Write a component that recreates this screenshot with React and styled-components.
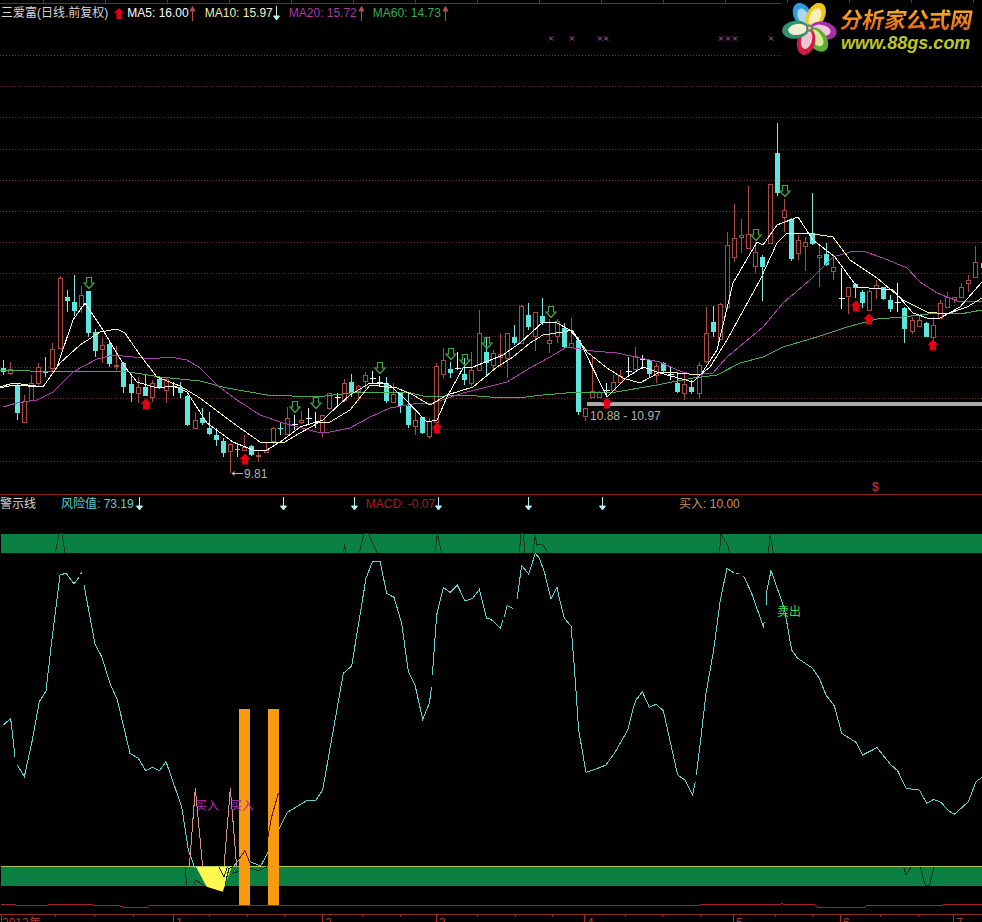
import React from "react";
import styled, { createGlobalStyle } from "styled-components";

const GlobalStyle = createGlobalStyle`
  html, body {
    margin: 0;
    background: #000;
    font-family: "Liberation Sans", "Noto Sans CJK SC", sans-serif;
  }
`;

const Page = styled.div`
  position: relative;
  display: flex;
  flex-direction: column;
  width: 982px;
  height: 922px;
  overflow: hidden;
  background: #000;
`;

const TopRule = styled.div`
  flex: none;
  height: 3px;
  border-bottom: 1px solid #8c2026;
  background: repeating-linear-gradient(
    90deg,
    transparent 0 43px,
    #8c2026 43px 44px,
    transparent 44px 62px
  );
`;

const Legend = styled.div`
  flex: none;
  display: flex;
  align-items: center;
  height: ${(p) => p.$height}px;
  font-size: 12px;
  line-height: 1;
  white-space: nowrap;
`;

const LegendText = styled.span`
  margin-left: ${(p) => p.$gap || 0}px;
  color: ${(p) => p.$color};
`;

const MarkIcon = styled.svg`
  flex: none;
  display: block;
  margin-left: ${(p) => p.$gap || 0}px;
`;

const Chart = styled.svg`
  flex: none;
  display: block;
  width: 982px;
  height: ${(p) => p.$height}px;

  polyline,
  line {
    shape-rendering: crispEdges;
  }
`;

const Divider = styled.div`
  flex: none;
  height: 1px;
  background: #8c2026;
`;

const ChartText = styled.text`
  font-family: "Liberation Sans", "Noto Sans CJK SC", sans-serif;
  font-size: 12px;
  font-weight: ${(p) => p.$weight || 400};
  fill: ${(p) => p.$color};
`;

const Logo = styled.div`
  position: absolute;
  top: 3px;
  right: 0;
  display: flex;
  width: 201px;
  height: 54px;
  background: #000;
`;

const LogoText = styled.div`
  display: flex;
  flex-direction: column;
  margin-left: 2px;
`;

const LogoName = styled.div`
  width: 140px;
  padding-top: 2px;
  font-family: "Noto Sans CJK SC", sans-serif;
  font-size: 22px;
  font-weight: 700;
  line-height: 27px;
  white-space: nowrap;
  transform: skewX(-10deg);
  background: linear-gradient(180deg, #f6b62c 15%, #ee6a12 85%);
  -webkit-background-clip: text;
  background-clip: text;
  color: transparent;
`;

const LogoUrl = styled.div`
  margin-top: 2px;
  font-family: "Liberation Sans", sans-serif;
  font-size: 18px;
  font-style: italic;
  font-weight: 700;
  line-height: 18px;
  color: #bcc622;
  white-space: nowrap;
`;

const R = 1;
const C = 0;
const W = 2;

// hi, body top, body bottom, lo, kind
const candles = [
  [360, 368, 372, 375, C], [362, 369, 373, 375, R], [384, 385, 413, 420, C], [395, 401, 422, 422, R],
  [375, 383, 400, 401, R], [363, 367, 383, 386, R], [357, 371, 373, 377, C], [343, 349, 368, 373, R],
  [276, 278, 348, 349, R], [290, 297, 301, 312, C], [275, 302, 311, 316, C], [286, 295, 306, 313, R],
  [291, 291, 333, 337, C], [329, 332, 351, 357, C], [338, 345, 349, 363, R], [340, 344, 364, 367, C],
  [346, 365, 366, 370, R], [362, 363, 387, 393, C], [376, 384, 393, 402, C], [377, 387, 393, 403, R],
  [375, 387, 396, 396, C], [380, 383, 397, 402, R], [377, 379, 388, 389, C], [377, 379, 390, 403, R],
  [382, 385, 386, 396, W], [382, 387, 393, 398, C], [395, 396, 425, 426, C], [412, 420, 428, 429, R],
  [408, 418, 423, 425, C], [412, 428, 434, 435, C], [428, 435, 440, 446, C], [438, 441, 453, 457, C],
  [444, 444, 451, 473, R], [443, 449, 450, 457, C], [435, 447, 450, 451, R], [445, 446, 455, 456, C],
  [452, 455, 456, 462, R], [442, 450, 452, 453, R], [427, 428, 441, 445, R], [423, 428, 429, 435, C],
  [407, 418, 434, 435, R], [415, 423, 424, 430, W], [411, 420, 422, 424, R], [408, 417, 418, 425, W],
  [412, 421, 422, 428, W], [415, 415, 432, 437, R], [393, 393, 408, 410, R],
  [393, 396, 397, 406, W], [379, 383, 400, 402, R], [374, 382, 393, 397, C], [385, 386, 391, 401, R],
  [372, 375, 381, 389, R], [371, 377, 378, 384, W], [376, 381, 382, 387, W], [377, 383, 401, 403, C],
  [383, 394, 402, 403, R], [392, 393, 406, 413, C], [392, 406, 425, 428, C], [412, 420, 426, 435, R],
  [417, 417, 433, 434, C], [418, 421, 436, 439, R], [363, 366, 422, 423, R], [348, 360, 374, 378, R],
  [362, 369, 373, 378, C], [352, 367, 368, 370, W], [358, 374, 380, 385, C], [352, 370, 383, 386, R],
  [310, 333, 370, 370, R], [337, 352, 363, 377, C], [350, 353, 365, 370, R], [334, 354, 357, 367, R],
  [333, 333, 358, 378, R], [325, 337, 343, 345, C], [305, 306, 343, 343, R], [303, 315, 327, 330, C],
  [312, 312, 336, 351, R], [298, 316, 323, 325, C], [319, 340, 343, 353, R], [319, 321, 336, 343, R],
  [323, 328, 347, 348, C], [318, 343, 347, 349, R], [337, 340, 412, 415, C], [408, 408, 416, 421, R],
  [356, 391, 397, 398, R], [391, 392, 397, 398, R], [383, 389, 390, 397, W], [375, 382, 390, 390, R],
  [370, 376, 382, 384, R], [357, 370, 371, 375, W], [347, 356, 369, 370, R], [355, 358, 359, 369, W],
  [359, 360, 374, 377, C], [363, 366, 375, 383, R],
  [362, 363, 371, 373, C], [367, 373, 375, 380, W], [372, 383, 392, 393, C], [373, 384, 393, 400, R],
  [380, 387, 392, 394, C], [362, 365, 393, 399, R], [307, 333, 361, 363, R], [306, 322, 332, 337, C],
  [303, 304, 339, 340, R], [232, 245, 307, 310, R], [204, 238, 257, 262, R], [219, 235, 237, 253, R],
  [186, 234, 248, 248, R], [242, 252, 266, 273, R], [255, 257, 267, 301, C], [184, 184, 243, 244, R],
  [123, 153, 193, 196, C], [199, 210, 217, 232, R], [218, 219, 259, 261, C], [235, 240, 253, 260, R],
  [237, 242, 246, 271, R], [193, 233, 244, 245, C], [245, 255, 257, 287, R], [243, 254, 265, 266, C],
  [257, 267, 271, 280, R], [268, 297, 298, 309, W], [287, 287, 296, 314, R], [283, 284, 288, 298, C],
  [290, 292, 303, 308, C], [290, 291, 310, 311, R], [280, 285, 288, 299, R], [287, 287, 299, 300, C],
  [295, 300, 309, 312, C], [283, 301, 303, 312, W], [307, 308, 329, 343, C], [317, 320, 331, 334, R],
  [316, 320, 326, 327, R], [322, 323, 337, 337, C], [317, 325, 337, 340, R], [300, 303, 318, 319, R],
  [292, 297, 307, 307, R], [297, 297, 299, 303, R], [283, 287, 297, 298, R], [275, 280, 283, 292, R],
  [246, 262, 277, 277, R], [257, 263, 268, 280, C],
];

const ma5 = [
  [0, 388], [13, 385], [43, 387], [57, 367], [73, 320], [85, 303], [103, 330], [125, 367], [137, 382],
  [157, 388], [173, 386], [187, 392], [207, 423], [233, 442], [253, 450], [267, 450], [283, 440], [300, 427],
  [323, 420], [330, 413], [350, 395], [370, 383], [387, 383], [403, 397], [427, 422], [437, 420], [447, 397],
  [463, 368], [473, 367], [503, 355], [520, 343], [543, 322], [557, 323], [570, 330], [580, 342], [607, 397],
  [627, 377], [643, 367], [660, 373], [693, 382], [702, 373], [717, 350], [733, 283], [757, 242], [763, 245],
  [777, 225], [798, 217], [813, 240], [835, 257], [857, 287], [893, 290], [913, 313], [927, 318], [940, 318],
  [960, 307], [982, 282],
];
const ma10 = [
  [0, 387], [13, 383], [43, 387], [60, 363], [80, 345], [100, 332], [117, 329], [125, 333], [140, 355], [157, 377],
  [180, 386], [200, 398], [233, 423], [260, 442], [283, 443], [300, 433], [320, 422], [330, 422], [350, 410],
  [370, 385], [397, 388], [413, 395], [430, 405], [447, 395], [473, 387], [497, 367], [513, 357], [530, 343],
  [543, 335], [563, 332], [572, 330], [587, 352], [607, 368], [623, 378], [640, 383], [660, 372], [677, 373],
  [700, 375], [710, 367], [727, 340], [760, 280], [777, 243], [787, 233], [807, 233], [833, 237], [850, 260],
  [877, 278], [903, 300], [927, 312], [947, 314], [967, 307], [982, 298],
];
const ma20 = [
  [3, 407], [17, 403], [37, 400], [53, 392], [73, 372], [97, 359], [113, 355], [133, 357], [150, 359], [170, 357],
  [187, 360], [200, 368], [217, 385], [237, 400], [260, 415], [283, 423], [317, 432], [330, 432], [350, 428],
  [370, 417], [390, 408], [413, 404], [433, 403], [463, 393], [487, 387], [507, 382], [530, 368], [550, 357],
  [567, 347], [593, 351], [617, 353], [640, 358], [660, 362], [677, 370], [693, 375], [713, 373], [727, 357],
  [763, 327], [783, 303], [810, 280], [833, 257], [850, 252], [863, 251], [883, 258], [907, 268], [920, 282],
  [937, 293], [957, 301], [982, 301],
];
const ma60 = [
  [0, 370], [60, 372], [123, 371], [160, 377], [200, 381], [227, 388], [267, 395], [317, 397], [350, 393],
  [407, 392], [427, 397], [463, 395], [490, 397], [517, 398], [543, 395], [578, 392], [610, 393], [657, 385],
  [693, 378], [717, 375], [740, 363], [763, 357], [783, 347], [817, 337], [847, 327], [877, 319], [903, 317],
  [937, 313], [960, 314], [982, 310],
];

const gridRows = Array.from({ length: 14 }, (_, i) => Math.round(55 + i * 31.2) + 0.5);
const crosses = [551, 572, 600, 606, 721, 728, 735, 771];
const hollowArrows = [
  [89, 283], [295, 407], [316, 403], [380, 368], [451, 354], [465, 360], [487, 343], [551, 312], [756, 235], [785, 191],
];
const redArrows = [[146, 404], [245, 459], [437, 428], [607, 403], [856, 306], [869, 319], [933, 345]];

// zoomed crop coordinates back to page coordinates
const crop = (ox, oy, pts) => pts.map(([x, y]) => [ox + x / 3, oy + y / 3]);
const line = (pts) => pts.map((p) => p.join(",")).join(" ");

const oscillator = [
  crop(0, 560, [[10, 495], [32, 475], [45, 590]]),
  crop(0, 560, [[52, 615], [73, 650], [95, 550], [118, 425], [138, 393], [155, 245], [180, 45], [198, 40], [222, 72], [238, 50]]),
  crop(0, 560, [[242, 42], [246, 36]]),
  crop(0, 560, [
    [252, 75], [285, 252], [305, 290], [330, 370], [352, 420], [390, 580], [415, 595], [437, 632], [458, 622], [478, 632],
    [498, 605], [545, 740], [565, 870], [585, 925],
  ]),
  crop(0, 560, [
    [700, 920], [720, 895], [750, 905], [782, 918], [805, 875], [837, 808], [862, 757], [920, 722], [948, 720], [968, 690],
    [1030, 340], [1055, 318], [1098, 55], [1118, 3], [1140, 3], [1160, 100], [1182, 112], [1205, 190], [1225, 335], [1245, 375],
    [1268, 478], [1288, 430], [1295, 380],
  ]),
  [
    ...crop(0, 560, [[1297, 345], [1310, 165], [1330, 82], [1350, 97], [1372, 75], [1395, 123], [1418, 115], [1438, 88], [1460, 175], [1473, 178]]),
    ...crop(491, 560, [[28, 205], [36, 180]]),
  ],
  crop(491, 560, [[40, 170], [48, 137], [65, 145]]),
  crop(491, 560, [
    [78, 118], [92, 17], [113, 42], [133, -20], [145, -5], [160, 35], [180, 118], [198, 82], [205, 115], [220, 175], [240, 198],
    [250, 320], [263, 510], [285, 637], [320, 625], [345, 615], [372, 577], [410, 510], [425, 450], [435, 420], [454, 395],
    [475, 442], [495, 433], [517, 452], [560, 645], [582, 660], [605, 705], [613, 665],
  ]),
  crop(491, 560, [[616, 645], [630, 530], [645, 400], [668, 270], [688, 120], [708, 25], [730, 40]]),
  crop(491, 560, [[735, 40], [745, 40]]),
  crop(491, 560, [[757, 47], [780, 95], [817, 200], [820, 185]]),
  crop(491, 560, [
    [826, 135], [826, 100], [840, 32], [880, 145], [902, 270], [920, 295], [965, 325], [985, 355], [1005, 405], [1030, 438],
    [1052, 520], [1095, 547], [1115, 585], [1158, 563], [1200, 615], [1220, 632], [1245, 685], [1285, 690], [1307, 730],
    [1328, 718], [1350, 727], [1372, 752], [1390, 763], [1432, 725], [1455, 665], [1473, 652],
  ]),
];

const upperTraces = [
  crop(0, 485, [[165, 205], [178, 145], [186, 145], [195, 205]]),
  crop(0, 485, [[1030, 205], [1034, 178], [1038, 205]]),
  crop(0, 485, [[1078, 205], [1092, 145], [1105, 145], [1132, 205]]),
  crop(0, 485, [[1305, 205], [1312, 145], [1325, 205]]),
  crop(491, 485, [[85, 205], [90, 145], [97, 145], [102, 205]]),
  crop(491, 485, [[125, 205], [133, 150], [137, 180], [155, 178], [172, 205]]),
  crop(491, 485, [[685, 205], [690, 148], [710, 180], [716, 205]]),
  crop(491, 485, [[832, 205], [838, 145], [847, 205]]),
];

const lowerTraces = [
  crop(150, 700, [[105, 500], [110, 555]]),
  crop(150, 700, [[130, 555], [138, 540], [158, 555]]),
  crop(150, 700, [[207, 500], [222, 530], [232, 500]]),
  crop(150, 700, [[225, 555], [237, 505], [248, 500]]),
  crop(150, 700, [[245, 520], [300, 505], [325, 512], [352, 500]]),
  crop(782, 850, [[365, 50], [372, 75], [386, 52]]),
  crop(782, 850, [[415, 50], [430, 107], [442, 107], [456, 50]]),
];

const salmon = [
  crop(150, 700, [[118, 500], [136, 265], [158, 500]]),
  crop(150, 700, [[222, 500], [241, 265], [260, 500]]),
];

const maroon = [
  crop(150, 700, [[265, 480], [285, 452], [300, 490]]),
  crop(150, 700, [[354, 410], [365, 350], [385, 280]]),
];

const baseline = [
  [1, 904], [15, 904], [16, 905], [48, 905], [50, 904], [92, 904], [93, 905], [120, 906], [123, 907], [148, 907], [150, 905],
  [700, 905], [782, 904], [815, 905], [817, 907], [865, 907], [867, 905], [943, 905], [945, 904], [982, 904],
];

const axisTicks = [55, 94, 133, 209, 247, 284, 362, 400, 477, 515, 552, 625, 662, 700, 775, 812, 880, 918];
const axisLabels = [
  ["2012年", 2, 1], ["1", 176, 173], ["2", 325, 322], ["3", 439, 436], ["4", 587, 584], ["5", 736, 733], ["6", 843, 840], ["7", 956, 953],
];

const petals = [
  [-28, "#2f9ae0", "#a9d9ee"],
  [27, "#efc41f", "#f8f0b4"],
  [101, "#a52da6", "#f2c4dd"],
  [145, "#5fae33", "#d9e79f"],
  [-166, "#cf1a44", "#f1c3ce"],
  [-97, "#2f9170", "#efefd2"],
];

const ThinArrow = ({ color, down, gap, height = 15 }) => (
  <MarkIcon $gap={gap} width="7" height={height} viewBox={`0 0 7 ${height}`}>
    {down ? (
      <path d={`M3.5 0V${height - 4}M0.5 ${height - 5}H6.5L3.5 ${height - 1}Z`} stroke={color} fill={color} strokeWidth="1" />
    ) : (
      <path d={`M3.5 ${height}V4M1 5H6L3.5 0.5Z`} stroke={color} fill={color} strokeWidth="1" />
    )}
  </MarkIcon>
);

const BoldArrow = ({ gap }) => (
  <MarkIcon $gap={gap} width="10" height="11" viewBox="0 0 10 11">
    <path d="M5 0L10 5H7.5V11H2.5V5H0Z" fill="#e00012" />
  </MarkIcon>
);

const Candle = ({ index, data }) => {
  const [hi, top, bot, lo, kind] = data;
  const x = Math.floor(3.3 + 7.1 * index) + 0.5;
  const color = kind === R ? "#ab4b43" : kind === W ? "#d8fbfb" : "#5ee6de";
  if (kind === R) {
    return (
      <g stroke={color} strokeWidth="1">
        <line x1={x} x2={x} y1={hi} y2={top} />
        <line x1={x} x2={x} y1={bot} y2={lo} />
        <rect x={x - 2} y={top + 0.5} width="4" height={Math.max(bot - top, 1)} fill="#000" />
      </g>
    );
  }
  return (
    <g>
      <line x1={x} x2={x} y1={hi} y2={lo} stroke={kind === W ? color : "#7fe4e0"} strokeWidth="1" />
      {kind === W ? (
        <line x1={x - 3} x2={x + 3} y1={top + 1} y2={top + 1} stroke={color} strokeWidth="1" />
      ) : (
        <rect x={x - 2.5} y={top} width="5" height={bot - top} fill={color} />
      )}
    </g>
  );
};

const Trace = ({ pts, color, width = 1 }) => (
  <polyline points={line(pts)} fill="none" stroke={color} strokeWidth={width} />
);

const UpperChart = () => (
  <Chart $height={472} viewBox="0 22 982 472">
    {gridRows.map((y) => (
      <line key={y} x1="0" x2="982" y1={y} y2={y} stroke="#7a2a2c" strokeWidth="1" strokeDasharray="1 2" />
    ))}
    {crosses.map((x) => (
      <path key={x} d={`M${x - 2} 36.5L${x + 2} 40.5M${x + 2} 36.5L${x - 2} 40.5`} stroke="#c050c4" strokeWidth="1" />
    ))}
    {candles.map((c, i) => (
      <Candle key={i} index={i} data={c} />
    ))}
    <Trace pts={ma60} color="#48ad58" />
    <Trace pts={ma20} color="#a93fa8" />
    <Trace pts={ma10} color="#f2f2b4" />
    <Trace pts={ma5} color="#ffffff" />
    <rect x="587" y="402" width="395" height="4" fill="#a9a9a9" />
    {hollowArrows.map(([x, y]) => (
      <path
        key={x}
        d={`M${x - 2.5} ${y - 5.5}H${x + 2.5}V${y}H${x + 5}L${x} ${y + 5.5}L${x - 5} ${y}H${x - 2.5}Z`}
        fill="none"
        stroke="#3fa63f"
        strokeWidth="1.2"
      />
    ))}
    {redArrows.map(([x, y]) => (
      <path
        key={x}
        d={`M${x} ${y - 5.5}L${x + 5.5} ${y}H${x + 3}V${y + 5.5}H${x - 3}V${y}H${x - 5.5}Z`}
        fill="#e40014"
      />
    ))}
    <path d="M232 473.5H243M232 473.5L235 471.5M232 473.5L235 475.5" stroke="#b8b8b8" fill="none" />
    <ChartText x="244" y="478" $color="#b4b4b4">9.81</ChartText>
    <ChartText x="590" y="420" $color="#b4b4b4">10.88 - 10.97</ChartText>
    <ChartText x="872" y="491" $color="#c02030" $weight={700}>$</ChartText>
  </Chart>
);

const LowerChart = () => (
  <Chart $height={410} viewBox="0 512 982 410">
    <rect x="1" y="534" width="981" height="19" fill="#0a8042" />
    <rect x="1" y="866" width="981" height="20" fill="#0a8042" />
    <line x1="1" x2="982" y1="866.5" y2="866.5" stroke="#a8c85a" />
    <polygon points={line(crop(150, 700, [[138, 500], [245, 500], [218, 575], [170, 560]]))} fill="#fff84e" />
    {upperTraces.map((t, i) => (
      <Trace key={i} pts={t} color="#12351f" />
    ))}
    {lowerTraces.map((t, i) => (
      <Trace key={i} pts={t} color="#0c2c18" />
    ))}
    {oscillator.map((t, i) => (
      <Trace key={i} pts={t} color="#66d2d0" />
    ))}
    {salmon.map((t, i) => (
      <Trace key={i} pts={t} color="#d8937f" />
    ))}
    <rect x="239" y="709" width="11" height="197" fill="#f89a10" />
    <rect x="268" y="709" width="11" height="197" fill="#f89a10" />
    {maroon.map((t, i) => (
      <Trace key={i} pts={t} color="#5e1020" />
    ))}
    <ChartText x="195" y="810" $color="#b12fb3">买入</ChartText>
    <ChartText x="230" y="810" $color="#b12fb3">买入</ChartText>
    <ChartText x="777" y="616" $color="#3fd84a">卖出</ChartText>
    <Trace pts={baseline} color="#a3222e" />
    <line x1="0" x2="982" y1="914.5" y2="914.5" stroke="#8c2a2e" />
    {axisTicks.map((x) => (
      <line key={x} x1={x + 0.5} x2={x + 0.5} y1="914" y2="917" stroke="#8c2a2e" />
    ))}
    {axisLabels.map(([label, x, tick]) => (
      <g key={label}>
        <line x1={tick + 0.5} x2={tick + 0.5} y1="914" y2="922" stroke="#a82a2e" />
        <ChartText x={x} y="927" $color="#b23a3a">{label}</ChartText>
      </g>
    ))}
  </Chart>
);

const LogoMark = () => (
  <svg width="58" height="54" viewBox="779 3 58 54">
    {petals.map(([angle, outer, inner]) => (
      <g key={angle} transform={`rotate(${angle} 807.5 28)`}>
        <ellipse cx="807.5" cy="14" rx="9" ry="13.5" fill={outer} />
        <ellipse cx="807.5" cy="16" rx="5.5" ry="9.5" fill={inner} />
      </g>
    ))}
    <circle cx="807.5" cy="28" r="3.5" fill="#7d7a5a" />
    <circle cx="807.5" cy="28" r="1.5" fill="#d8d4c0" />
  </svg>
);

export default function App() {
  return (
    <Page>
      <GlobalStyle />
      <TopRule />
      <Legend $height={18}>
        <LegendText $gap={1} $color="#d6d6d6">三爱富(日线.前复权)</LegendText>
        <BoldArrow gap={6} />
        <LegendText $gap={3} $color="#ffffff">MA5: 16.00</LegendText>
        <ThinArrow color="#b05050" />
        <LegendText $gap={9} $color="#f0f0b8">MA10: 15.97</LegendText>
        <ThinArrow color="#b4f2f2" down />
        <LegendText $gap={9} $color="#ab3ca8">MA20: 15.72</LegendText>
        <ThinArrow gap={1} color="#b05050" />
        <LegendText $gap={8} $color="#35ad54">MA60: 14.73</LegendText>
        <ThinArrow gap={1} color="#b05050" />
      </Legend>
      <UpperChart />
      <Divider />
      <Legend $height={17}>
        <LegendText $color="#d6d6d6">警示线</LegendText>
        <LegendText $gap={25} $color="#5fcfcf">风险值: 73.19</LegendText>
        <ThinArrow gap={2} color="#b4f2f2" down height={14} />
        <ThinArrow gap={137} color="#b4f2f2" down height={14} />
        <ThinArrow gap={64} color="#b4f2f2" down height={14} />
        <LegendText $gap={8} $color="#a81c22">MACD: -0.07</LegendText>
        <ThinArrow color="#b4f2f2" down height={14} />
        <ThinArrow gap={83} color="#b4f2f2" down height={14} />
        <ThinArrow gap={67} color="#b4f2f2" down height={14} />
        <LegendText $gap={73} $color="#c4906e">买入: 10.00</LegendText>
      </Legend>
      <LowerChart />
      <Logo>
        <LogoMark />
        <LogoText>
          <LogoName>分析家公式网</LogoName>
          <LogoUrl>www.88gs.com</LogoUrl>
        </LogoText>
      </Logo>
    </Page>
  );
}
